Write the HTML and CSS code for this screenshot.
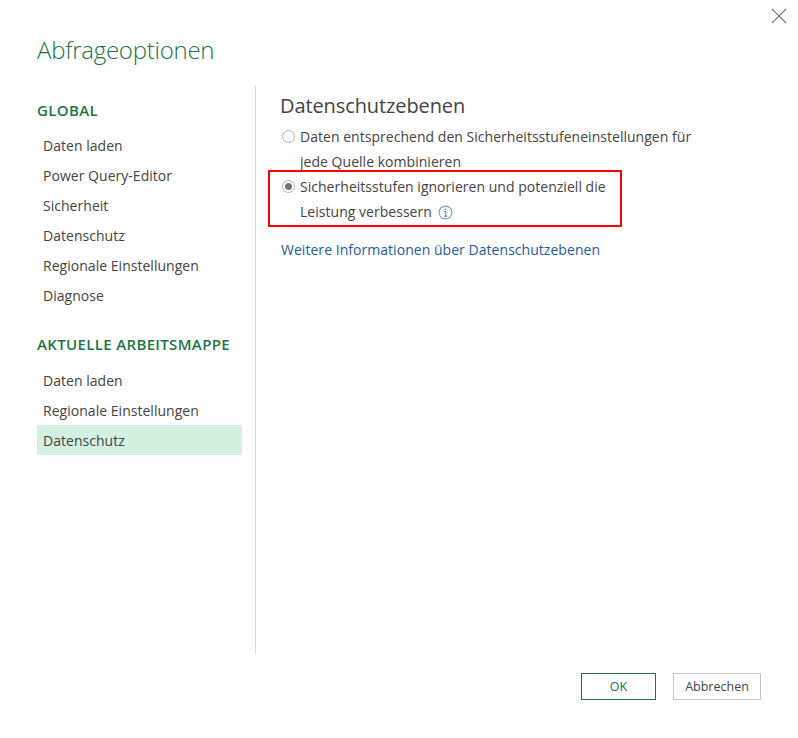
FILE: index.html
```html
<!DOCTYPE html>
<html lang="de">
<head>
<meta charset="utf-8">
<title>Abfrageoptionen</title>
<link rel="stylesheet" href="styles.css">
</head>
<body>
<div class="dialog">
  <button class="close" aria-label="Schließen">
    <svg width="16" height="16" viewBox="0 0 16 16"><path d="M1 1L15 15M15 1L1 15" stroke="#7a7a7a" stroke-width="1.1" fill="none"/></svg>
  </button>
  <h1 class="title">Abfrageoptionen</h1>
  <div class="main">
    <nav class="sidebar">
      <h2 class="group first">GLOBAL</h2>
      <a class="item">Daten laden</a>
      <a class="item">Power Query-Editor</a>
      <a class="item">Sicherheit</a>
      <a class="item">Datenschutz</a>
      <a class="item">Regionale Einstellungen</a>
      <a class="item">Diagnose</a>
      <h2 class="group second">AKTUELLE ARBEITSMAPPE</h2>
      <a class="item">Daten laden</a>
      <a class="item">Regionale Einstellungen</a>
      <a class="item selected">Datenschutz</a>
    </nav>
    <section class="content">
      <h2 class="heading">Datenschutzebenen</h2>
      <div class="option">
        <span class="radio"></span>
        <span class="label">Daten entsprechend den Sicherheitsstufeneinstellungen für<br>jede Quelle kombinieren</span>
      </div>
      <div class="option">
        <span class="radio checked"></span>
        <span class="label">Sicherheitsstufen ignorieren und potenziell die<br>Leistung verbessern
          <svg class="info" width="15" height="15" viewBox="0 0 15 15"><circle cx="7.5" cy="7.5" r="6.4" fill="none" stroke="#6f9fd8" stroke-width="1.1"/><path d="M6.2 6.6H7.9V11M6.2 11.2H9.2" fill="none" stroke="#3f78c0" stroke-width="1"/><rect x="6.9" y="3.6" width="1.3" height="1.4" fill="#3f78c0"/></svg>
        </span>
        <div class="highlight"></div>
      </div>
      <a class="link">Weitere Informationen über Datenschutzebenen</a>
    </section>
  </div>
  <div class="footer">
    <button class="btn primary">OK</button>
    <button class="btn">Abbrechen</button>
  </div>
</div>
</body>
</html>
```
FILE: styles.css
```css
* { box-sizing: border-box; }
html, body { margin: 0; padding: 0; background: #fff; }
body { font-family: "Open Sans", "Noto Sans", sans-serif; color: #444; overflow: hidden; }
.dialog { position: relative; width: 798px; height: 738px; padding: 33px 37px 0; }
.close { position: absolute; top: 8px; right: 11px; width: 16px; height: 16px; padding: 0; border: 0; background: none; display: block; }
.close svg { display: block; }
.title { margin: 0; font-size: 24px; line-height: 33px; font-weight: 300; color: #217346; letter-spacing: -0.25px; }
.main { display: flex; margin-top: 20px; height: 568px; }
.sidebar { width: 219px; border-right: 1px solid #d9d9d9; display: flex; flex-direction: column; padding-right: 13px; }
.group { margin: 0; font-size: 15px; line-height: 20px; font-weight: 600; color: #217346; letter-spacing: 0.35px; }
.group.first { margin-top: 14px; margin-bottom: 10px; }
.group.second { margin-top: 24px; margin-bottom: 11px; }
.item { display: block; height: 30px; line-height: 30px; padding: 1px 0 0 6px; font-size: 14px; letter-spacing: 0.03px; color: #444; }
.item.selected { background: #d3f0e0; }
.content { padding-left: 24px; flex: 1; }
.heading { margin: 7px 0 0; font-size: 20px; line-height: 26px; font-weight: 400; color: #444; letter-spacing: -0.1px; }
.option { position: relative; padding-left: 20px; font-size: 14px; line-height: 25px; letter-spacing: 0.03px; }
.option:first-of-type { margin-top: 5px; }
.label { display: block; }
.radio { position: absolute; left: 2px; top: 6px; width: 13px; height: 13px; border: 1px solid #b0b0b0; border-radius: 50%; background: #fff; }
.radio.checked::after { content: ""; position: absolute; left: 2px; top: 2px; width: 7px; height: 7px; border-radius: 50%; background: #777; }
.info { vertical-align: -3px; margin-left: 2px; }
.highlight { position: absolute; left: -12px; top: -4px; width: 354px; height: 57px; border: 2px solid #f00; }
.link { display: block; margin-top: 15px; margin-left: 1px; font-size: 14px; line-height: 22px; color: #1f5c99; letter-spacing: 0.04px; }
.footer { display: flex; justify-content: flex-end; gap: 17px; margin-top: 19px; }
.btn { width: 88px; height: 27px; padding: 0; border: 1px solid #c6c6c6; background: #fff; font-family: inherit; font-size: 12.5px; color: #444; }
.btn.primary { width: 75px; border: 1.5px solid #217346; color: #217346; }
```
